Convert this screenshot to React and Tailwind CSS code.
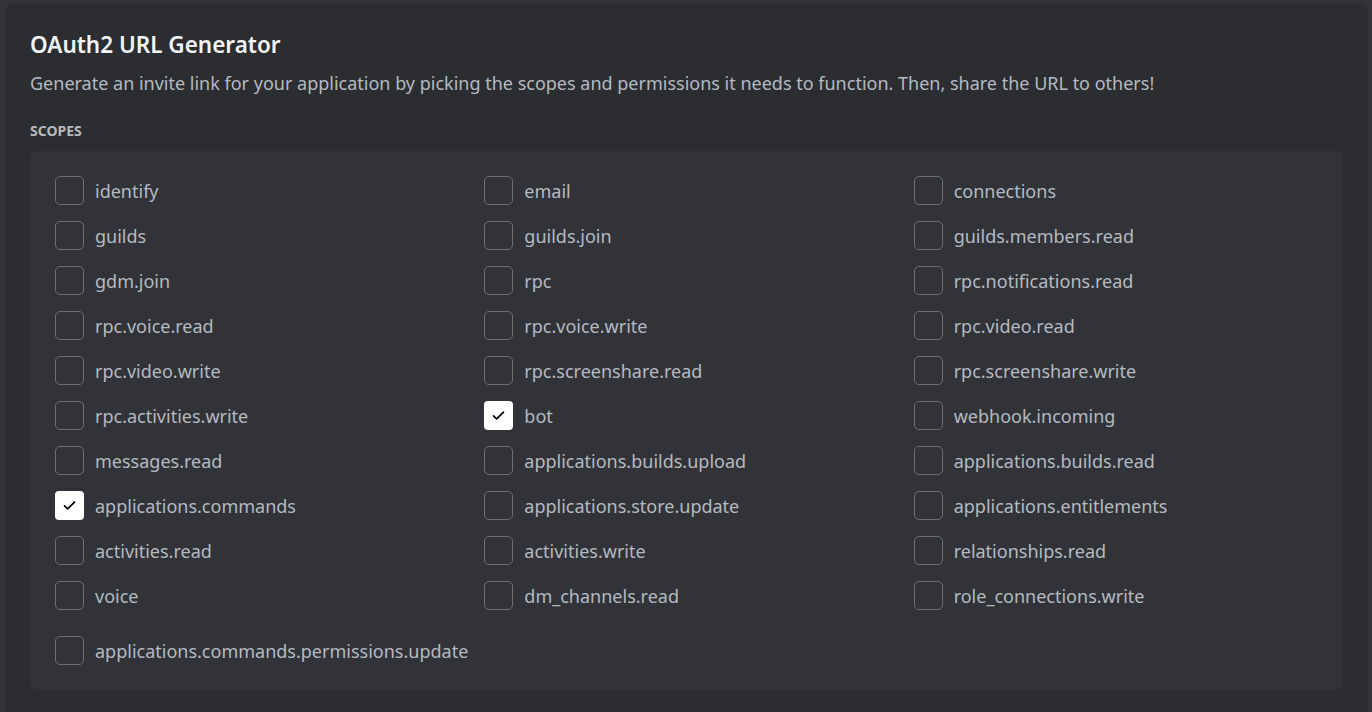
const scopes = [
  ['identify', false], ['email', false], ['connections', false],
  ['guilds', false], ['guilds.join', false], ['guilds.members.read', false],
  ['gdm.join', false], ['rpc', false], ['rpc.notifications.read', false],
  ['rpc.voice.read', false], ['rpc.voice.write', false], ['rpc.video.read', false],
  ['rpc.video.write', false], ['rpc.screenshare.read', false], ['rpc.screenshare.write', false],
  ['rpc.activities.write', false], ['bot', true], ['webhook.incoming', false],
  ['messages.read', false], ['applications.builds.upload', false], ['applications.builds.read', false],
  ['applications.commands', true], ['applications.store.update', false], ['applications.entitlements', false],
  ['activities.read', false], ['activities.write', false], ['relationships.read', false],
  ['voice', false], ['dm_channels.read', false], ['role_connections.write', false],
]

function Checkbox({ label, checked }) {
  return (
    <label className="flex items-center gap-[11px] cursor-pointer">
      {checked ? (
        <span className="w-[29px] h-[29px] rounded-[4px] bg-white flex items-center justify-center shrink-0">
          <svg width="15" height="15" viewBox="0 0 24 24" fill="none">
            <path d="M4 12.5l5 5L20 6.5" stroke="#000" strokeWidth="2.6" strokeLinecap="round" strokeLinejoin="round" />
          </svg>
        </span>
      ) : (
        <span className="w-[29px] h-[29px] rounded-[5px] border border-[#6d6f78] shrink-0" />
      )}
      <span className="text-[18px] text-[#b5bac1] leading-none whitespace-nowrap">{label}</span>
    </label>
  )
}

export default function App() {
  return (
    <div className="min-h-screen bg-[#313338] pt-[4px] pl-[5px] pr-[4px] overflow-hidden" style={{ fontFamily: '"Noto Sans", sans-serif' }}>
      <div className="bg-[#2b2d31] rounded-tl-[8px] rounded-tr-[8px] px-[25px] pt-[27px] h-[708px]">
        <h2 className="text-[22.5px] font-semibold text-[#f2f3f5] leading-[28px]">OAuth2 URL Generator</h2>
        <p className="mt-[12px] text-[18px] text-[#b5bac1] leading-[24px]">
          Generate an invite link for your application by picking the scopes and permissions it needs to function. Then, share the URL to others!
        </p>
        <div className="mt-[27px] text-[14px] font-bold uppercase text-[#b5bac1] leading-[18px]">Scopes</div>
        <div className="mt-[11px] bg-[#313338] rounded-[8px] px-[25px] pt-[25px] pb-[25px]">
          <div className="grid grid-cols-3 gap-x-[25px] gap-y-[16px]">
            {scopes.map(([label, checked]) => (
              <Checkbox key={label} label={label} checked={checked} />
            ))}
          </div>
          <div className="mt-[26px]">
            <Checkbox label="applications.commands.permissions.update" checked={false} />
          </div>
        </div>
      </div>
    </div>
  )
}
